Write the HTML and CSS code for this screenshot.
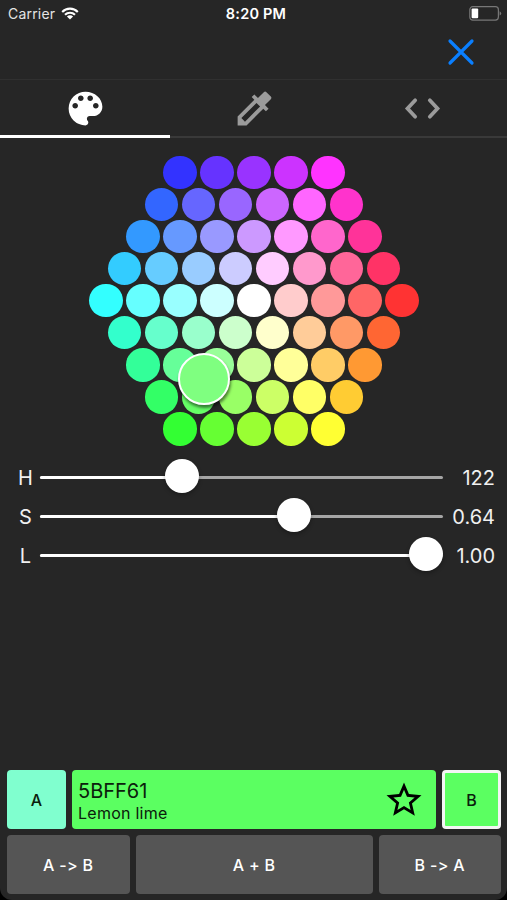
FILE: index.html
```
<!DOCTYPE html>
<html lang="en">
<head>
  <meta charset="UTF-8">
  <meta name="viewport" content="width=device-width, initial-scale=1.0">
  <title>Color picker</title>
  <link rel="stylesheet" href="styles.css">
</head>
<body>
  <div class="screen">
    <div class="status">
      <div class="carrier">
        <span>Carrier</span>
        <svg width="18" height="13" viewBox="0 0 18 13">
          <path d="M1.2 4.9a11 11 0 0 1 15.6 0M4 7.8a7.1 7.1 0 0 1 10 0" fill="none" stroke="#fff" stroke-width="2.1"/>
          <path d="M9 12.6L5.9 9.5a4.4 4.4 0 0 1 6.2 0z" fill="#fff"/>
        </svg>
      </div>
      <span class="time">8:20 PM</span>
      <svg class="battery" width="33" height="15" viewBox="0 0 33 15">
        <rect x="0.8" y="0.7" width="28.6" height="13.4" rx="3" fill="none" stroke="#777" stroke-width="1.2"/>
        <rect x="2.6" y="2.5" width="6.6" height="9.8" rx="1" fill="#fff"/>
        <path d="M30.6 5.2q1.6.7 1.6 2.2t-1.6 2.2z" fill="#777"/>
      </svg>
    </div>
    <div class="nav">
      <a class="close" href="javascript:;">
        <svg width="28" height="28" viewBox="0 0 28 28">
          <path d="M3 3L25 25M25 3L3 25" stroke="#0a7fff" stroke-width="3.2" stroke-linecap="round"/>
        </svg>
      </a>
    </div>
    <div class="tabs">
      <a class="tab active" href="javascript:;">
        <svg width="45" height="45" viewBox="0 0 24 24">
          <path d="M12 3a9 9 0 0 0 0 18c.83 0 1.5-.67 1.5-1.5 0-.39-.15-.74-.39-1.01-.23-.26-.38-.61-.38-.99 0-.83.67-1.5 1.5-1.5H16c2.76 0 5-2.24 5-5 0-4.42-4.03-8-9-8zm-5.5 9c-.83 0-1.5-.67-1.5-1.5S5.67 9 6.5 9 8 9.67 8 10.5 7.33 12 6.5 12zm3-4C8.67 8 8 7.33 8 6.5S8.67 5 9.5 5s1.5.67 1.5 1.5S10.33 8 9.5 8zm5 0c-.83 0-1.5-.67-1.5-1.5S13.67 5 14.5 5s1.5.67 1.5 1.5S15.33 8 14.5 8zm3 4c-.83 0-1.5-.67-1.5-1.5S16.67 9 17.5 9s1.5.67 1.5 1.5-.67 1.5-1.5 1.5z"/>
        </svg>
      </a>
      <a class="tab" href="javascript:;">
        <svg width="45" height="45" viewBox="0 0 24 24">
          <path d="M20.71 5.63l-2.34-2.34a1 1 0 0 0-1.41 0l-3.12 3.12-1.93-1.91-1.41 1.41 1.42 1.42L3 16.25V21h4.75l8.92-8.92 1.42 1.42 1.41-1.41-1.92-1.92 3.12-3.12c.4-.4.4-1.03.01-1.42zM6.92 19L5 17.08l8.06-8.06 1.92 1.92L6.92 19z"/>
        </svg>
      </a>
      <a class="tab" href="javascript:;">
        <svg width="45" height="45" viewBox="0 0 24 24">
          <path d="M8.1 7.6L4 12l4.1 4.4M15.9 7.6L20 12l-4.1 4.4" fill="none" stroke="#9b9b9b" stroke-width="2" stroke-linecap="round"/>
        </svg>
      </a>
    </div>
    <div class="wheel">
      <div id="dots"></div>
      <div class="picker"></div>
    </div>
    <div class="sliders" id="sliders"></div>
    <div class="bottom">
      <div class="row">
        <div class="swatch a">A</div>
        <div class="color">
          <div class="text">
            <p class="hex">5BFF61</p>
            <p class="name">Lemon lime</p>
          </div>
          <svg width="42" height="42" viewBox="0 0 24 24">
            <path d="M22 9.24l-7.19-.62L12 2 9.19 8.63 2 9.24l5.46 4.73L5.82 21 12 17.27 18.18 21l-1.63-7.03L22 9.24zM12 15.4l-3.76 2.27 1-4.28-3.32-2.88 4.38-.38L12 6.1l1.71 4.04 4.38.38-3.32 2.88 1 4.28L12 15.4z"/>
          </svg>
        </div>
        <div class="swatch b">B</div>
      </div>
      <div class="row">
        <div class="btn">A -&gt; B</div>
        <div class="btn wide">A + B</div>
        <div class="btn">B -&gt; A</div>
      </div>
    </div>
  </div>
  <script src="script.js"></script>
</body>
</html>
```
FILE: styles.css
```
*{
  margin: 0;
  padding: 0;
  box-sizing: border-box;
}
body{
  background-color: #000;
  font-family: Inter, "Liberation Sans", sans-serif;
  font-feature-settings: "calt" 0;
  color: #fff;
}
a{
  text-decoration: none;
}
svg{
  display: block;
}
.screen{
  width: 507px;
  height: 900px;
  background-color: #262626;
  border-radius: 0 0 12px 12px;
  display: flex;
  flex-direction: column;
  overflow: hidden;
}
.status{
  height: 28px;
  padding: 0 5px 1px 8px;
  display: grid;
  grid-template-columns: 1fr auto 1fr;
  align-items: center;
  font-size: 14px;
}
.carrier{
  display: flex;
  align-items: center;
  gap: 6px;
  color: #e4e4e4;
  letter-spacing: .2px;
}
.time{
  font-weight: 600;
  font-size: 14.5px;
  letter-spacing: .2px;
  margin-left: 2px;
}
.battery{
  justify-self: end;
}
.nav{
  height: 52px;
  border-bottom: 1px solid #303030;
  padding: 10px 32.5px 0 0;
  display: flex;
  justify-content: flex-end;
}
.tabs{
  height: 58px;
  display: flex;
}
.tab{
  flex: 1;
  display: flex;
  justify-content: center;
  padding-top: 6px;
  border-bottom: 2px solid #393939;
  fill: #9b9b9b;
}
.tab.active{
  flex: none;
  width: 170px;
  border-bottom: 3px solid #fff;
  fill: #fff;
}
.wheel{
  position: relative;
  height: 312px;
  padding: 17.5px 0 0 1px;
}
.dots{
  display: flex;
  justify-content: center;
  gap: 3.5px;
  height: 32.1px;
}
.dot{
  width: 33.5px;
  height: 33.5px;
  border-radius: 50%;
}
/* sits over the dots at the chosen color */
.picker{
  position: absolute;
  left: 178px;
  top: 215px;
  width: 52px;
  height: 52px;
  border: 2.5px solid #fff;
  border-radius: 50%;
  background-color: #7fff80;
  box-shadow: 1px 3px 3px rgba(0,0,0,.5);
}
.sliders{
  padding: 8px 12px 0 16px;
}
.slider{
  height: 39px;
  display: flex;
  align-items: center;
  font-size: 20px;
  color: #f0f0f0;
}
.label{
  width: 19px;
  text-align: center;
  margin-right: 5px;
}
.track{
  position: relative;
  width: 403px;
  height: 3px;
  border-radius: 2px;
  background-color: #a5a5a5;
}
.fill{
  height: 3px;
  border-radius: 2px;
  background-color: #fff;
}
.thumb{
  position: absolute;
  top: -17px;
  width: 34px;
  height: 34px;
  margin-left: -17px;
  border-radius: 50%;
  background-color: #fff;
  box-shadow: 0 2px 4px rgba(0,0,0,.3);
}
.value{
  flex: 1;
  text-align: right;
}
.bottom{
  margin-top: auto;
  padding: 0 6px 6px 7px;
  display: flex;
  flex-direction: column;
  gap: 6px;
}
.row{
  display: flex;
  gap: 6px;
  height: 59px;
}
.swatch, .btn{
  display: flex;
  align-items: center;
  justify-content: center;
  border-radius: 4px;
  font-weight: 500;
  font-size: 16px;
}
.swatch{
  width: 59px;
  color: #0b200c;
}
.a{
  background-color: #80ffcf;
}
.b{
  background-color: #5bff61;
  border: 3px solid #f4f4f4;
}
.color{
  flex: 1;
  display: flex;
  align-items: center;
  justify-content: space-between;
  padding: 0 11px 0 6px;
  border-radius: 4px;
  background-color: #5bff61;
  color: #0b200c;
}
.text{
  padding-top: 3px;
}
.hex{
  font-size: 20px;
  line-height: 24px;
}
.name{
  font-size: 16px;
  line-height: 21px;
  letter-spacing: .25px;
}
.btn{
  width: 122.5px;
  background-color: #555;
  letter-spacing: .3px;
}
.wide{
  flex: 1;
  width: auto;
}
```
FILE: script.js
```
const rows = [
  "33f 63f 93f c3f f3f",
  "36f 66f 96f c6f f6f f3c",
  "39f 69f 99f c9f f9f f6c f39",
  "3cf 6cf 9cf ccf fcf f9c f69 f36",
  "3ff 6ff 9ff cff fff fcc f99 f66 f33",
  "3fc 6fc 9fc cfc ffc fc9 f96 f63",
  "3f9 6f9 9f9 cf9 ff9 fc6 f93",
  "3f6 6f6 9f6 cf6 ff6 fc3",
  "3f3 6f3 9f3 cf3 ff3"
];
document.getElementById("dots").innerHTML = rows.map(row=>{
  const dots = row.split(" ").map(c=>`<div class="dot" style="background:#${c}"></div>`).join("");
  return `<div class="dots">${dots}</div>`;
}).join("");

const sliders = [
  {label: "H", value: "122", x: 142},
  {label: "S", value: "0.64", x: 254.3},
  {label: "L", value: "1.00", x: 386.3}
];
document.getElementById("sliders").innerHTML = sliders.map(s=>`
  <div class="slider">
    <span class="label">${s.label}</span>
    <div class="track">
      <div class="fill" style="width:${s.x}px"></div>
      <div class="thumb" style="left:${s.x}px"></div>
    </div>
    <span class="value">${s.value}</span>
  </div>`).join("");
```
